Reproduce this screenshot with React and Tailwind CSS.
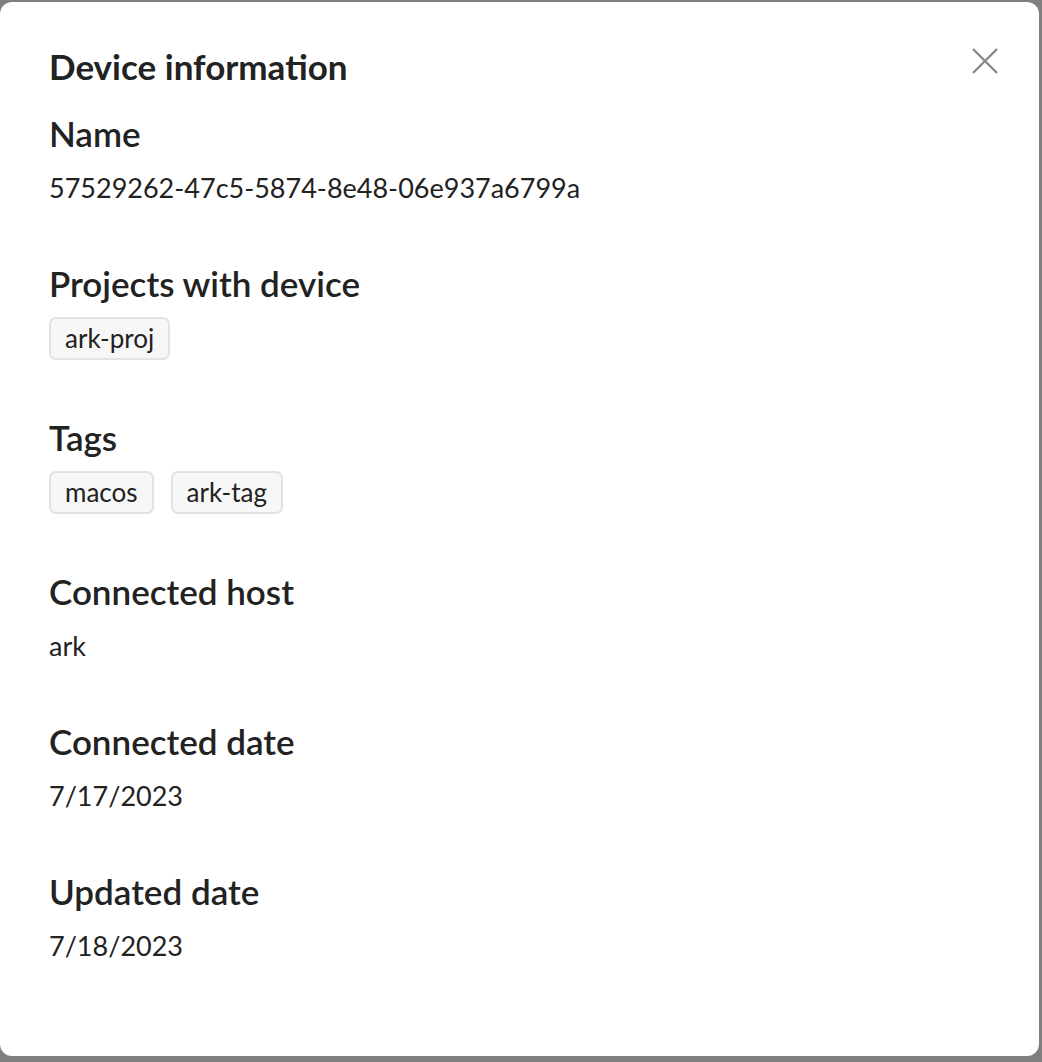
import React from 'react';

const device = {
  name: '57529262-47c5-5874-8e48-06e937a6799a',
  projects: ['ark-proj'],
  tags: ['macos', 'ark-tag'],
  host: 'ark',
  connected: '7/17/2023',
  updated: '7/18/2023',
};

// Section heading + body
const Field = ({ label, children, gap = 'mt-[17px]' }) => (
  <div>
    <h3 className="text-[35px] leading-[40px] font-semibold text-[#222]">{label}</h3>
    <div className={gap}>{children}</div>
  </div>
);

const Value = ({ children }) => (
  <p className="text-[27px] leading-[36px] text-[#222]">{children}</p>
);

const Chip = ({ children }) => (
  <span className="h-[43px] px-[14px] flex items-center rounded-[7px] border-2 border-[#e2e2e2] bg-[#f7f7f7] text-[26px] text-[#222]">
    {children}
  </span>
);

export default function App() {
  return (
    <div className="h-[1062px] bg-[#7f7f7f] pt-[2px] pr-[3px] pb-[6px] font-['Lato',sans-serif]">
      <div className="h-full bg-white rounded-[12px] pl-[49px] pr-[41px] pt-[44px]">
        {/* Header */}
        <div className="flex items-start justify-between">
          <h2 className="text-[35px] leading-[40px] font-bold text-[#222]">Device information</h2>
          <button className="mt-[2px] p-0 text-[#8a8a8a]" aria-label="Close">
            <svg width="26" height="26" viewBox="0 0 26 26" fill="none" stroke="currentColor" strokeWidth="2.4">
              <path d="M1 1L25 25M25 1L1 25" />
            </svg>
          </button>
        </div>

        <div className="mt-[27px] flex flex-col gap-[57px]">
          <Field label="Name">
            <Value>{device.name}</Value>
          </Field>

          <Field label="Projects with device" gap="mt-[14px]">
            <div className="flex gap-[17px]">
              {device.projects.map((p) => (
                <Chip key={p}>{p}</Chip>
              ))}
            </div>
          </Field>

          <Field label="Tags" gap="mt-[14px]">
            <div className="flex gap-[17px]">
              {device.tags.map((t) => (
                <Chip key={t}>{t}</Chip>
              ))}
            </div>
          </Field>

          <Field label="Connected host">
            <Value>{device.host}</Value>
          </Field>

          <Field label="Connected date">
            <Value>{device.connected}</Value>
          </Field>

          <Field label="Updated date">
            <Value>{device.updated}</Value>
          </Field>
        </div>
      </div>
    </div>
  );
}
